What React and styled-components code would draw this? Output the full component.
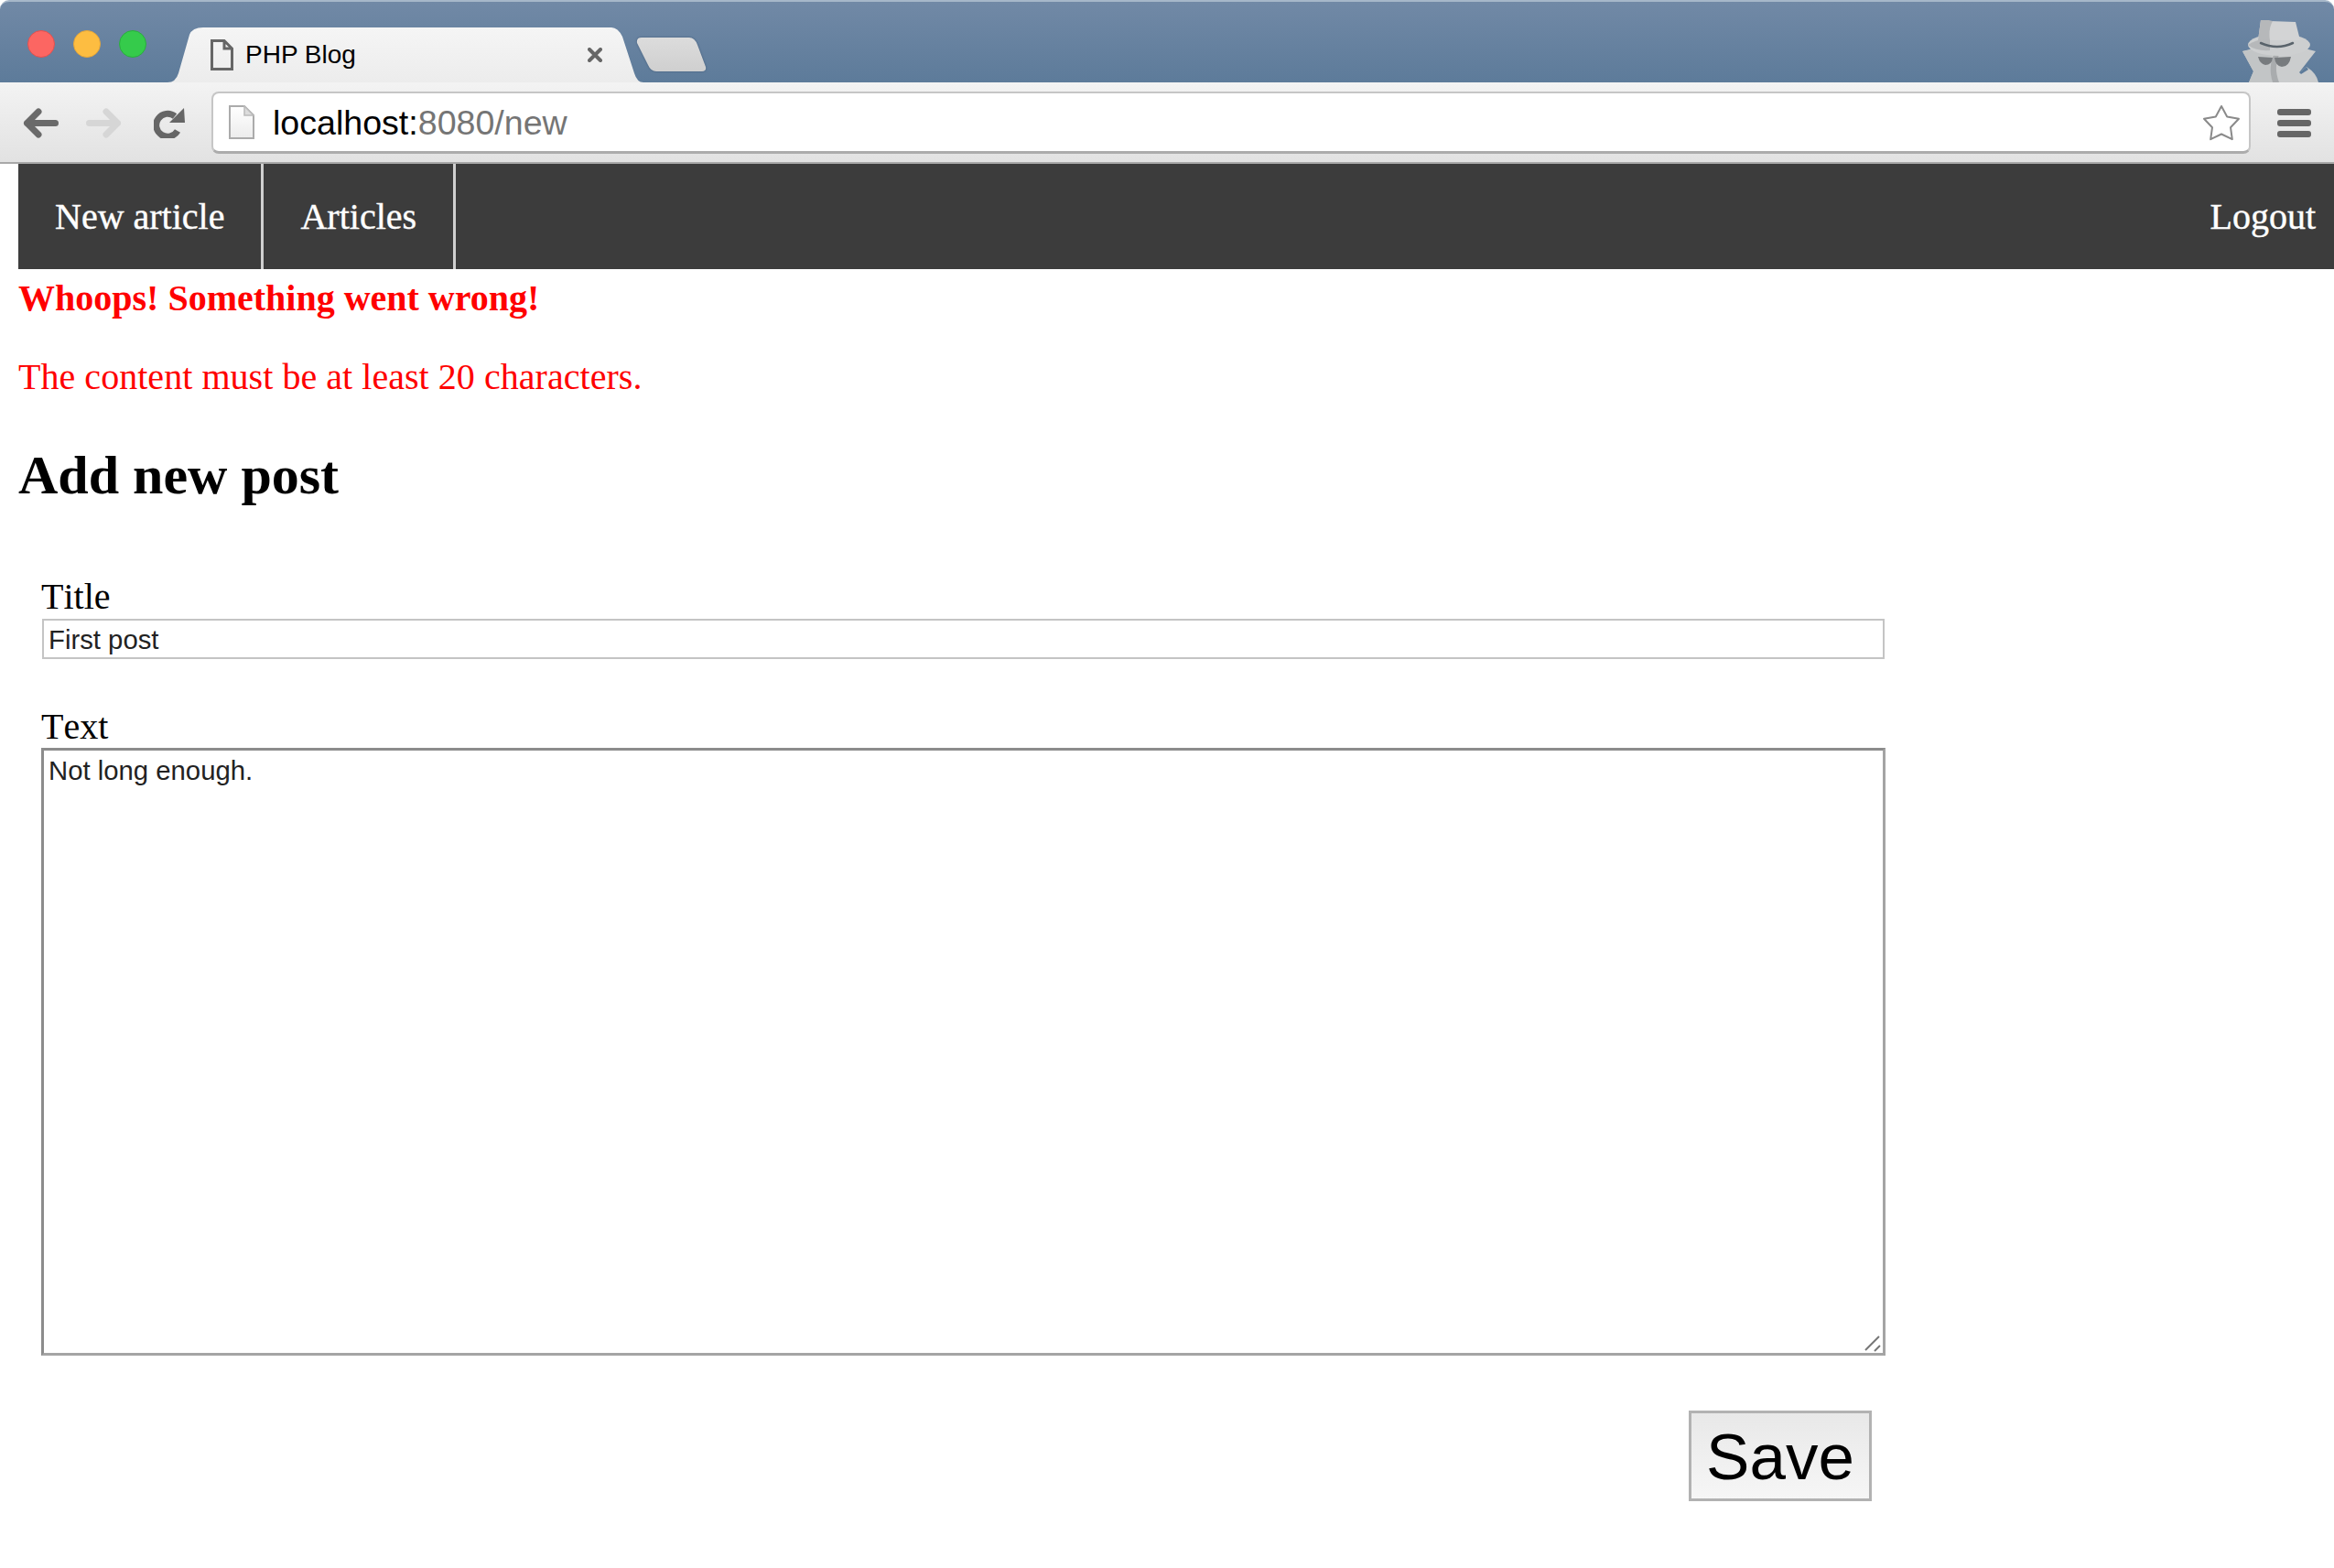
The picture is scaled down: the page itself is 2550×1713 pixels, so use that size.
import React from "react";
import styled, {createGlobalStyle} from "styled-components";

const GlobalStyle = createGlobalStyle`
    * {
        box-sizing: border-box;
    }
    body {
        margin: 0;
        background: #fff;
        color: #000;
        font-family: "Liberation Serif", "Times New Roman", serif;
        font-size: 40px;
    }
`;

const sansFont = `"Liberation Sans", Arial, sans-serif`;

/* browser chrome */
const TitleBar = styled.div`
    display: flex;
    align-items: flex-end;
    height: 90px;
    border-top: 2px solid #a6b7c9;
    border-radius: 10px 10px 0 0;
    background: linear-gradient(#7189a6, #5d7b9a);
`;

const Lights = styled.div`
    display: flex;
    gap: 20px;
    align-self: flex-start;
    margin: 31px 23px 0 30px;
`;

const Light = styled.span`
    width: 30px;
    height: 30px;
    border-radius: 50%;
    background: ${props => props.color};
    border: 1px solid ${props => props.edge};
`;

const Tab = styled.div`
    display: flex;
    align-items: center;
    gap: 13px;
    flex: none;
    width: 520px;
    height: 60px;
    padding: 0 45px 0 47px;
    background: linear-gradient(#f5f5f5, #ececec);
    clip-path: path("M0 60 Q9 60 12 50 L24 8 Q27 0 39 0 L485 0 Q492 0 497 10 L510 50 Q513 60 520 60 Z");
`;

const TabTitle = styled.span`
    font-family: ${sansFont};
    font-size: 28px;
    color: #000;
`;

const TabClose = styled.svg`
    margin-left: auto;
`;

const NewTab = styled.div`
    flex: none;
    width: 77px;
    height: 38px;
    margin: 0 0 11px -8px;
    filter: drop-shadow(0 0 1px #3f5a78);
    &::before {
        content: "";
        display: block;
        height: 100%;
        background: linear-gradient(#dcdcdc, #cfcfcf);
        clip-path: path("M6 0 L58 0 Q64 0 67 8 L76 32 Q77 37 72 37 L22 37 Q16 37 13 30 L1 6 Q0 0 6 0 Z");
    }
`;

const Incognito = styled.svg`
    flex: none;
    margin: 0 16px 0 auto;
`;

const Toolbar = styled.div`
    display: flex;
    align-items: center;
    gap: 30px;
    height: 89px;
    padding: 1px 25px 0;
    background: linear-gradient(#f3f3f3, #e2e2e2);
    border-bottom: 2px solid #a8a8a8;
`;

const ReloadIcon = styled.svg`
    flex: none;
    margin: 0 -2px 0 5px;
`;

const AddressBar = styled.div`
    display: flex;
    align-items: center;
    gap: 20px;
    flex: 1;
    height: 68px;
    padding: 0 8px 0 17px;
    background: #fff;
    border: 2px solid #c6c6c6;
    border-bottom: 3px solid #acacac;
    border-radius: 8px;
    font-family: ${sansFont};
    font-size: 37.6px;
`;

const AddressText = styled.div`
    padding-top: 2px;
`;

const Host = styled.span`
    color: #000;
`;

const Path = styled.span`
    color: #757575;
`;

const Star = styled.svg`
    flex: none;
    margin-left: auto;
`;

const MenuButton = styled.div`
    display: flex;
    flex-direction: column;
    gap: 5px;
    flex: none;
    width: 37px;
    margin-left: -1px;
`;

const MenuBar = styled.span`
    height: 7px;
    border-radius: 3px;
    background: #666;
`;

/* page */
const Page = styled.main`
    padding-left: 20px;
`;

const Nav = styled.nav`
    display: flex;
    height: 115px;
    background: #3c3c3c;
    -webkit-text-stroke: 0.4px #fff;
`;

const NavItem = styled.a`
    display: flex;
    align-items: center;
    padding: 0 40px;
    border-right: 3px solid #d0d0d0;
    color: #fff;
`;

const Logout = styled.a`
    display: flex;
    align-items: center;
    margin-left: auto;
    padding-right: 20px;
    color: #fff;
`;

const ErrorTitle = styled.strong`
    display: block;
    margin-top: 8px;
    color: #f00;
`;

const ErrorText = styled.p`
    margin: 39px 0 0;
    color: #f00;
    font-kerning: none;
    letter-spacing: 0.04px;
`;

const Heading = styled.h2`
    margin: 50px 0 0;
    font-size: 60px;
`;

const Form = styled.form`
    width: 2040px;
    margin-top: 75px;
    padding-left: 25px;
`;

const Field = styled.div`
    display: flex;
    flex-direction: column;
    margin-bottom: 51px;
`;

const Label = styled.label`
    line-height: 46px;
    font-kerning: none;
`;

const TextInput = styled.input`
    width: 2013px;
    height: 44px;
    margin: 1px 0 0 1px;
    padding: 2px 5px 0;
    background: #fff;
    border: 2px solid #c4c4c4;
    border-radius: 0;
    outline: none;
    color: #222;
    font-family: ${sansFont};
    font-size: 29.3px;
`;

const AreaBox = styled.div`
    position: relative;
`;

const TextArea = styled.textarea`
    display: block;
    width: 2015px;
    height: 664px;
    padding: 5px 5px;
    background: #fff;
    border: 3px solid #8c8c8c;
    border-bottom-color: #a4a4a4;
    border-right-color: #a4a4a4;
    border-radius: 0;
    outline: none;
    resize: none;
    color: #222;
    font-family: ${sansFont};
    font-size: 29.3px;
`;

const Grip = styled.svg`
    position: absolute;
    right: 5px;
    bottom: 4px;
`;

const Actions = styled.div`
    display: flex;
    justify-content: flex-end;
    margin: 60px 15px 0 0;
`;

const SaveButton = styled.button`
    width: 200px;
    height: 99px;
    padding: 2px 0 0;
    background: linear-gradient(#e8e8e8, #f6f6f6);
    border: 3px solid #b2b2b2;
    border-radius: 0;
    color: #000;
    font-family: ${sansFont};
    font-size: 71px;
`;

const Arrow = ({flip, color}) => (
    <svg width="39" height="33" viewBox="0 0 39 33" style={{flex: "none"}}>
        <g transform={flip ? "translate(39 0) scale(-1 1)" : undefined} fill="none" stroke={color} strokeWidth="7" strokeLinecap="round" strokeLinejoin="round">
            <path d="M4.5 16.5H35.5M17 4L4.5 16.5L17 29"/>
        </g>
    </svg>
);

const App = () => (
    <>
        <GlobalStyle/>
        <header>
            <TitleBar>
                <Lights>
                    <Light color="#fc6662" edge="#e2504e"/>
                    <Light color="#fdbd41" edge="#e5a639"/>
                    <Light color="#35cb4b" edge="#2aae3d"/>
                </Lights>
                <Tab>
                    <svg width="25" height="34" viewBox="0 0 25 34" style={{flex: "none"}}>
                        <path d="M1.5 1.5H15L23.5 10V32.5H1.5Z M15 1.5V10H23.5" fill="none" stroke="#666" strokeWidth="3"/>
                    </svg>
                    <TabTitle>PHP Blog</TabTitle>
                    <TabClose width="16" height="16" viewBox="0 0 16 16">
                        <path d="M2 2L14 14M14 2L2 14" stroke="#666" strokeWidth="4" strokeLinecap="round"/>
                    </TabClose>
                </Tab>
                <NewTab/>
                <Incognito width="84" height="68" viewBox="0 2 84 68">
                    <path d="M0 36L20 31L60 31L80 36L62 59L70 53Q81 60 83 70L7 70L12 58Z" fill="#cbcdce"/>
                    <path d="M16 33L36 33Q26 50 33 70L7 70L12 58L0 36Z" fill="#c2c5c6"/>
                    <path d="M33 70Q27 52 36 36L42 36Q33 52 40 70Z" fill="#a9acae"/>
                    <path d="M62 59L70 53L72 56L64 61Z" fill="#5d7b9a"/>
                    <ellipse cx="40" cy="29" rx="34" ry="12" fill="#cdcfd0"/>
                    <path d="M20 2Q26 1 30 3L58 4L63 24L17 24Z" fill="#d3d4d5"/>
                    <path d="M20 2Q26 1 33 3Q28 12 30 24L17 24Z" fill="#b6b8ba"/>
                    <path d="M6 29Q18 21 30 24L30 35Q14 36 6 29Z" fill="#b6b8ba"/>
                    <path d="M20 27Q38 35 55 27" fill="none" stroke="#59636b" strokeWidth="2.5" strokeLinecap="round"/>
                    <path d="M17 42L33 43Q32 51 25 51Q19 50 17 42Z M35 43L53 42Q51 53 43 53Q36 52 35 43Z" fill="#777b7e"/>
                </Incognito>
            </TitleBar>
            <Toolbar>
                <Arrow color="#6a6a6a"/>
                <Arrow flip color="#d6d6d6"/>
                <ReloadIcon width="35" height="33" viewBox="0 0 35 33">
                    <path d="M23 9A12.5 12.5 0 1 0 26 25" fill="none" stroke="#666" strokeWidth="7"/>
                    <path d="M33 0L34 16L17 16Z" fill="#666"/>
                </ReloadIcon>
                <AddressBar>
                    <svg width="28" height="37" viewBox="0 0 28 37" style={{flex: "none"}}>
                        <defs>
                            <linearGradient id="docFill" x1="0" y1="0" x2="0" y2="1">
                                <stop offset="0" stopColor="#fff"/>
                                <stop offset="1" stopColor="#ececec"/>
                            </linearGradient>
                        </defs>
                        <path d="M1 1H17L27 11V36H1Z" fill="url(#docFill)" stroke="#ababab" strokeWidth="2"/>
                        <path d="M17 1V11H27Z" fill="#dcdcdc" stroke="#bbb" strokeWidth="1.5"/>
                    </svg>
                    <AddressText>
                        <Host>localhost:</Host>
                        <Path>8080/new</Path>
                    </AddressText>
                    <Star width="44" height="44" viewBox="0 0 44 44">
                        <path d="M22 4L28.2 15.5L41 17.8L32 27.2L33.8 40.2L22 34.5L10.2 40.2L12 27.2L3 17.8L15.8 15.5Z" fill="#fff" stroke="#8a8a8a" strokeWidth="2" strokeLinejoin="round"/>
                    </Star>
                </AddressBar>
                <MenuButton>
                    <MenuBar/>
                    <MenuBar/>
                    <MenuBar/>
                </MenuButton>
            </Toolbar>
        </header>
        <Page>
            <Nav>
                <NavItem>New article</NavItem>
                <NavItem>Articles</NavItem>
                <Logout>Logout</Logout>
            </Nav>
            <ErrorTitle>Whoops! Something went wrong!</ErrorTitle>
            <ErrorText>The content must be at least 20 characters.</ErrorText>
            <Heading>Add new post</Heading>
            <Form>
                <Field>
                    <Label>Title</Label>
                    <TextInput defaultValue="First post"/>
                </Field>
                <Field>
                    <Label>Text</Label>
                    <AreaBox>
                        <TextArea defaultValue="Not long enough."/>
                        <Grip width="18" height="18" viewBox="0 0 18 18">
                            <path d="M1 16L16 1M11 17L17 11" stroke="#777" strokeWidth="2"/>
                        </Grip>
                    </AreaBox>
                </Field>
                <Actions>
                    <SaveButton type="button">Save</SaveButton>
                </Actions>
            </Form>
        </Page>
    </>
);

export default App;
